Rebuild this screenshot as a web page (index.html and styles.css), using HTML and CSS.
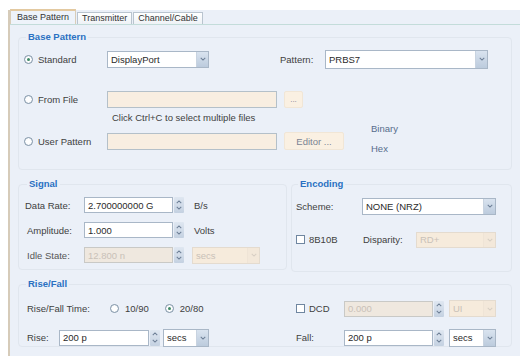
FILE: index.html
```html
<!DOCTYPE html>
<html>
<head>
<meta charset="utf-8">
<link rel="stylesheet" href="styles.css">
</head>
<body>
<div class="panel">
  <div class="tabs">
    <div class="tab active">Base Pattern</div>
    <div class="tab">Transmitter</div>
    <div class="tab">Channel/Cable</div>
  </div>
  <div class="body">
    <fieldset class="group base">
      <legend>Base Pattern</legend>
      <div class="row r1">
        <div class="opt"><span class="radio on"></span>Standard</div>
        <div class="select w-dp"><span class="val">DisplayPort</span><span class="arrow"><svg viewBox="0 0 8 5"><path d="M1 1l3 3 3-3"/></svg></span></div>
        <span class="lbl pat">Pattern:</span>
        <div class="select w-prbs"><span class="val">PRBS7</span><span class="arrow"><svg viewBox="0 0 8 5"><path d="M1 1l3 3 3-3"/></svg></span></div>
      </div>
      <div class="row r2">
        <div class="opt"><span class="radio"></span>From File</div>
        <div class="field w-file"></div>
        <div class="btn w-dots">...</div>
      </div>
      <div class="hint">Click Ctrl+C to select multiple files</div>
      <div class="row r3">
        <div class="opt"><span class="radio"></span>User Pattern</div>
        <div class="field w-file"></div>
        <div class="btn w-editor">Editor ...</div>
        <div class="fmt">
          <span>Binary</span>
          <span>Hex</span>
        </div>
      </div>
    </fieldset>

    <div class="mid">
      <fieldset class="group signal">
        <legend>Signal</legend>
        <div class="row s-row">
          <span class="lbl s-lbl">Data Rate:</span>
          <div class="input w-num"><span class="val">2.700000000 G</span></div>
          <span class="spin"><svg viewBox="0 0 8 5"><path d="M1 4l3-3 3 3"/></svg><svg viewBox="0 0 8 5"><path d="M1 1l3 3 3-3"/></svg></span>
          <span class="unit">B/s</span>
        </div>
        <div class="row s-row">
          <span class="lbl s-lbl ind">Amplitude:</span>
          <div class="input w-num"><span class="val">1.000</span></div>
          <span class="spin"><svg viewBox="0 0 8 5"><path d="M1 4l3-3 3 3"/></svg><svg viewBox="0 0 8 5"><path d="M1 1l3 3 3-3"/></svg></span>
          <span class="unit">Volts</span>
        </div>
        <div class="row s-row">
          <span class="lbl s-lbl ind dim">Idle State:</span>
          <div class="input w-num disabled"><span class="val">12.800 n</span></div>
          <span class="spin"><svg viewBox="0 0 8 5"><path d="M1 4l3-3 3 3"/></svg><svg viewBox="0 0 8 5"><path d="M1 1l3 3 3-3"/></svg></span>
          <div class="select disabled w-idle"><span class="val">secs</span><span class="arrow"><svg viewBox="0 0 8 5"><path d="M1 1l3 3 3-3"/></svg></span></div>
        </div>
      </fieldset>
      <fieldset class="group encoding">
        <legend>Encoding</legend>
        <div class="row e1">
          <span class="lbl e-lbl">Scheme:</span>
          <div class="select w-scheme"><span class="val">NONE (NRZ)</span><span class="arrow"><svg viewBox="0 0 8 5"><path d="M1 1l3 3 3-3"/></svg></span></div>
        </div>
        <div class="row e2">
          <div class="chk-opt"><span class="check"></span>8B10B</div>
          <span class="lbl disp">Disparity:</span>
          <div class="select disabled w-disp"><span class="val">RD+</span><span class="arrow"><svg viewBox="0 0 8 5"><path d="M1 1l3 3 3-3"/></svg></span></div>
        </div>
      </fieldset>
    </div>

    <fieldset class="group risefall">
      <legend>Rise/Fall</legend>
      <div class="rf-grid">
        <div class="row f1">
          <span class="lbl rf-lbl">Rise/Fall Time:</span>
          <span class="ropt"><span class="radio"></span>10/90</span>
          <span class="ropt second"><span class="radio on"></span>20/80</span>
        </div>
        <div class="row f1">
          <div class="chk-opt wide"><span class="check"></span>DCD</div>
          <div class="input w-dcd disabled"><span class="val">0.000</span></div>
          <span class="spin"><svg viewBox="0 0 8 5"><path d="M1 4l3-3 3 3"/></svg><svg viewBox="0 0 8 5"><path d="M1 1l3 3 3-3"/></svg></span>
          <div class="select disabled w-unit2 short"><span class="val">UI</span><span class="arrow"><svg viewBox="0 0 8 5"><path d="M1 1l3 3 3-3"/></svg></span></div>
        </div>
        <div class="row f2">
          <span class="lbl rise-lbl">Rise:</span>
          <div class="input w-rise"><span class="val">200 p</span></div>
          <span class="spin"><svg viewBox="0 0 8 5"><path d="M1 4l3-3 3 3"/></svg><svg viewBox="0 0 8 5"><path d="M1 1l3 3 3-3"/></svg></span>
          <div class="select w-unit1"><span class="val">secs</span><span class="arrow"><svg viewBox="0 0 8 5"><path d="M1 1l3 3 3-3"/></svg></span></div>
        </div>
        <div class="row f2">
          <span class="lbl fall-lbl">Fall:</span>
          <div class="input w-dcd"><span class="val">200 p</span></div>
          <span class="spin"><svg viewBox="0 0 8 5"><path d="M1 4l3-3 3 3"/></svg><svg viewBox="0 0 8 5"><path d="M1 1l3 3 3-3"/></svg></span>
          <div class="select w-unit2"><span class="val">secs</span><span class="arrow"><svg viewBox="0 0 8 5"><path d="M1 1l3 3 3-3"/></svg></span></div>
        </div>
      </div>
    </fieldset>
  </div>
</div>
</body>
</html>
```

FILE: styles.css
```css
* { box-sizing: border-box; }
html, body { margin: 0; padding: 0; background: #ffffff; }
body {
  font-family: "Liberation Sans", Arial, sans-serif;
  font-size: 9.5px;
  color: #404040;
}
.panel {
  margin: 10px 0 0 8px;
  width: 512px;
  height: 346px;
  background: #ebf0f8;
  border-left: 2px solid #d6cbb9;
}
.tabs {
  display: flex;
  align-items: flex-end;
  height: 15px;
  border-bottom: 1px solid #c3dcda;
}
.tab {
  height: 12px;
  padding: 0 4px;
  line-height: 11px;
  font-size: 9px;
  color: #333;
  background: linear-gradient(#ffffff, #eef2f6);
  border: 1px solid #b9c4cf;
  border-bottom: none;
  margin-right: 1px;
}
.tab.active {
  height: 15px;
  line-height: 13px;
  padding: 0 6px;
  background: #eef3fa;
  border-color: #d9cdb8;
  border-top: 2px solid #e3c9a0;
}
.body { padding: 6px 8px 0 8px; }

.group {
  margin: 0;
  padding: 0 0 0 5px;
  border: 1px solid #e0e6ee;
  border-radius: 4px;
  min-width: 0;
}
.group legend {
  margin-left: 2px;
  padding: 0 2px;
  font-weight: bold;
  color: #2a70c2;
  font-size: 9.5px;
  line-height: 12px;
}
.row { display: flex; align-items: center; }

/* Base pattern */
.base { height: 139px; }
.r1 { margin-top: 7px; height: 18px; }
.r2 { margin-top: 22px; height: 18px; }
.r3 { margin-top: 8px; height: 18px; }
.opt { display: flex; align-items: center; width: 83px; }
.radio {
  display: inline-block;
  width: 9px; height: 9px;
  border: 1px solid #7f93a6;
  border-radius: 50%;
  background: radial-gradient(circle, #ffffff 40%, #e6edf3 100%);
  margin-right: 5px;
  position: relative;
  flex: none;
}
.radio.on::after {
  content: "";
  position: absolute;
  left: 2px; top: 2px;
  width: 3px; height: 3px;
  border-radius: 50%;
  background: #3f8a66;
}
.select, .input, .field {
  display: flex;
  align-items: center;
  height: 17px;
  border: 1px solid #a9b7c7;
  background: #ffffff;
  flex: none;
}
.select .val, .input .val { flex: 1; padding-left: 3px; color: #2a2a2a; white-space: nowrap; overflow: hidden; }
.arrow {
  width: 12px;
  align-self: stretch;
  background: linear-gradient(#d9e3ef, #bccbdd);
  border-left: 1px solid #c8d3e0;
  display: flex; align-items: center; justify-content: center;
}
.arrow svg, .spin svg { width: 6px; height: 4px; fill: none; stroke: #6d7f96; stroke-width: 1.4; }
.w-dp { width: 102px; }
.pat { margin-left: 71px; width: 45px; }
.w-prbs { width: 163px; height: 19px; }
.field { background: #f8eee1; border-color: #b4c0c9; }
.w-file { width: 170px; }
.btn {
  margin-left: 7px;
  height: 17px;
  background: #faf0e2;
  border: 1px solid #f1e6d6;
  border-radius: 2px;
  color: #7b8494;
  display: flex; align-items: center; justify-content: center;
}
.w-dots { width: 19px; font-size: 8px; }
.w-editor { width: 60px; height: 18px; }
.hint { margin: 4px 0 0 88px; line-height: 12px; }
.fmt {
  display: flex; flex-direction: column; gap: 8px;
  margin-left: 27px; margin-bottom: 5px;
  color: #566d8c; line-height: 12px;
}

/* Middle */
.mid { display: flex; gap: 4px; margin-top: 8px; }
.signal { width: 269px; height: 92px; padding-left: 6px; }
.encoding { width: 221px; height: 94px; padding-left: 4px; }
.s-row { height: 16px; margin-top: 9px; }
.s-row:first-of-type { margin-top: 7px; }
.s-lbl { width: 59px; }
.ind { padding-left: 2px; }
.dim { color: #555; }
.w-num { width: 89px; height: 16px; }
.spin {
  width: 10px; height: 16px; margin-left: 1px;
  display: flex; flex-direction: column; align-items: center; justify-content: space-evenly;
  background: linear-gradient(#dfe7f1, #c4d1e1);
  border-radius: 1px;
  flex: none;
}
.unit { margin-left: 10px; }
.disabled { background: #f6ebdc; border-color: #e4dbcf; }
.disabled .val { color: #c9c1b8; }
.disabled .arrow { background: #f3e8da; border-left-color: #efe4d6; }
.disabled .arrow svg { stroke: #d8cfc4; }
.input.disabled { border-color: #c9c9c6; background: #efe8df; }
.w-idle { width: 68px; margin-left: 8px; height: 17px; }
.e1 { margin-top: 7px; height: 18px; }
.e-lbl { width: 66px; }
.w-scheme { width: 134px; }
.e2 { margin-top: 16px; height: 17px; }
.chk-opt { display: flex; align-items: center; width: 67px; }
.check {
  width: 9px; height: 9px;
  border: 1px solid #6f86a0;
  background: #ffffff;
  margin-right: 4px;
  flex: none;
}
.disp { width: 53px; }
.w-disp { width: 80px; height: 16px; }

/* Rise/Fall */
.risefall { margin-top: 6px; height: 69px; }
.rf-grid { display: grid; grid-template-columns: 272px 1fr; }
.f1 { margin-top: 10px; height: 17px; }
.f2 { margin-top: 12px; height: 17px; }
.rf-lbl { width: 86px; padding-left: 3px; }
.ropt { display: flex; align-items: center; }
.ropt .radio { margin-right: 6px; }
.ropt.second { margin-left: 16px; }
.chk-opt.wide { width: 48px; }
.rise-lbl { width: 35px; padding-left: 3px; }
.w-rise { width: 90px; height: 16px; }
.w-unit1 { width: 46px; margin-left: 3px; height: 18px; }
.fall-lbl { width: 48px; }
.w-dcd { width: 89px; height: 16px; }
.w-unit2 { width: 47px; margin-left: 5px; height: 18px; }
.w-unit2.short { height: 17px; }
```
